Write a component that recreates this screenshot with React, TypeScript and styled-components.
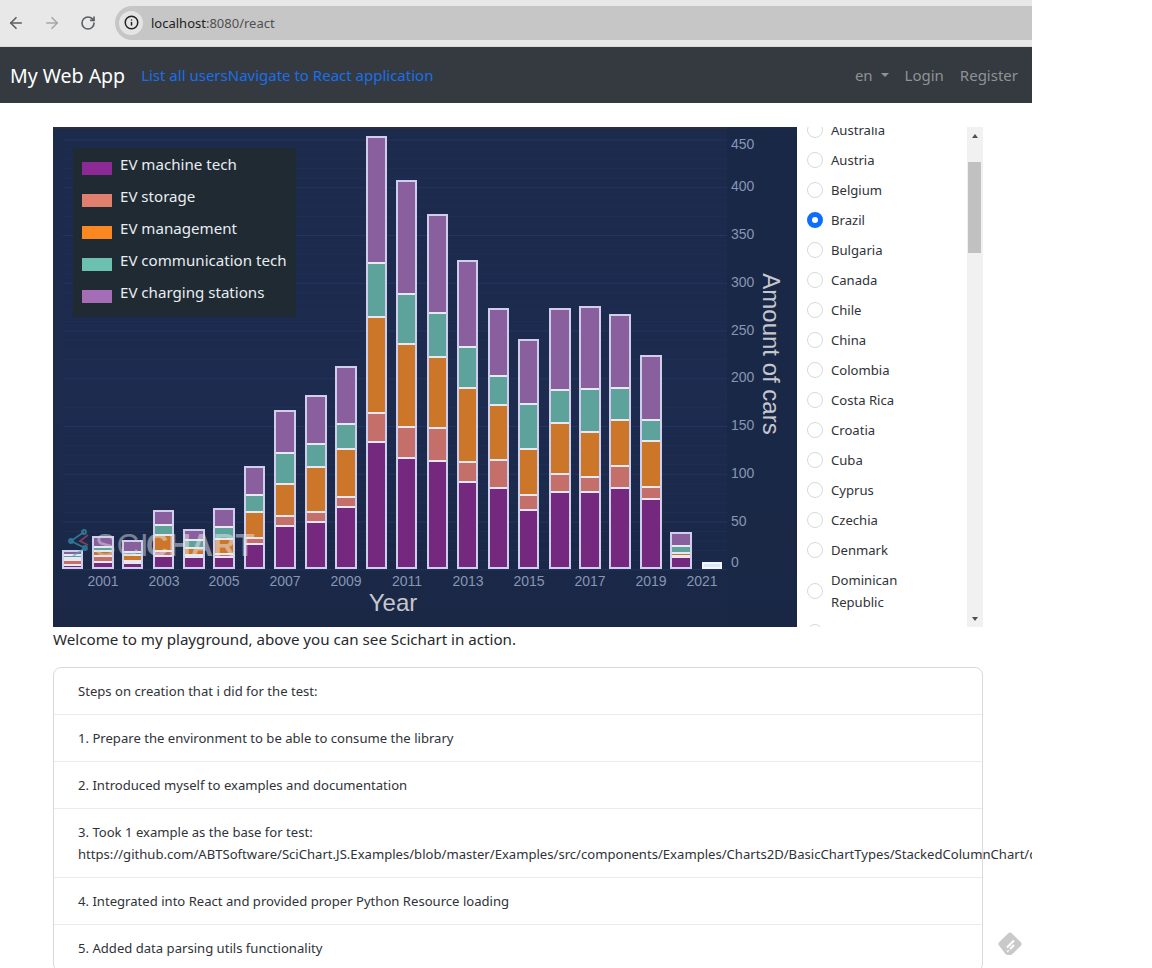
import React from "react";
import styled, { createGlobalStyle } from "styled-components";
import { ArrowLeft, ArrowRight, Info, RotateCw } from "lucide-react";

const UI_FONT = `"Noto Sans", "Open Sans", sans-serif`;
const CHART_FONT = `"Liberation Sans", Arial, sans-serif`;

const GlobalStyle = createGlobalStyle`
	html, body {
		margin: 0;
		padding: 0;
		background: #fff;
		overflow: hidden;
	}
	* {
		box-sizing: border-box;
	}
`;

// pixel y of the top of each segment: machine, storage, management, communication, charging
const BARS: { x: number; w: number; tops: number[] }[] = [
	{ x: 63, w: 19, tops: [565, 560, 558, 555, 551] },
	{ x: 93, w: 20, tops: [562, 556, 551, 547, 537] },
	{ x: 123, w: 19, tops: [563, 561, 555, 552, 541] },
	{ x: 154, w: 19, tops: [556, 551, 535, 525, 511] },
	{ x: 184, w: 20, tops: [557, 555, 548, 540, 530] },
	{ x: 214, w: 20, tops: [557, 554, 539, 527, 509] },
	{ x: 245, w: 19, tops: [544, 538, 512, 495, 467] },
	{ x: 275, w: 20, tops: [526, 516, 484, 453, 411] },
	{ x: 306, w: 20, tops: [522, 512, 467, 444, 396] },
	{ x: 336, w: 20, tops: [507, 497, 449, 424, 367] },
	{ x: 367, w: 19, tops: [442, 413, 317, 263, 137] },
	{ x: 397, w: 19, tops: [458, 427, 344, 294, 181] },
	{ x: 428, w: 19, tops: [461, 428, 357, 313, 215] },
	{ x: 458, w: 19, tops: [482, 462, 388, 347, 261] },
	{ x: 489, w: 19, tops: [488, 460, 405, 376, 309] },
	{ x: 519, w: 19, tops: [510, 495, 449, 404, 340] },
	{ x: 550, w: 20, tops: [492, 474, 423, 390, 309] },
	{ x: 580, w: 20, tops: [492, 477, 432, 389, 307] },
	{ x: 610, w: 20, tops: [488, 466, 420, 388, 315] },
	{ x: 641, w: 20, tops: [499, 487, 441, 420, 356] },
	{ x: 671, w: 20, tops: [557, 556, 553, 546, 533] },
];

const SEGMENT_COLORS = ["#74297f", "#c46f6a", "#cc762a", "#5ea39b", "#8a5f9d"];
const BASELINE = 568;

const X_TICKS = [
	[103, "2001"], [164, "2003"], [224, "2005"], [285, "2007"], [346, "2009"], [407, "2011"],
	[468, "2013"], [529, "2015"], [590, "2017"], [651, "2019"], [702, "2021"],
] as const;

const Y_TICKS = [
	[144, "450"], [186, "400"], [234, "350"], [282, "300"], [330, "250"],
	[377, "200"], [425, "150"], [473, "100"], [521, "50"], [562, "0"],
] as const;

const LEGEND = [
	["EV machine tech", "#8b2a94"],
	["EV storage", "#e07f6d"],
	["EV management", "#fa8720"],
	["EV communication tech", "#6cc0b0"],
	["EV charging stations", "#a56db5"],
];

const COUNTRIES = [
	"Algeria", "Argentina", "Armenia", "Australia", "Austria", "Belgium", "Brazil", "Bulgaria", "Canada", "Chile",
	"China", "Colombia", "Costa Rica", "Croatia", "Cuba", "Cyprus", "Czechia", "Denmark", "Dominican Republic", "Ecuador",
];

const STEPS = [
	"Steps on creation that i did for the test:",
	"1. Prepare the environment to be able to consume the library",
	"2. Introduced myself to examples and documentation",
	"3. Took 1 example as the base for test: https://github.com/ABTSoftware/SciChart.JS.Examples/blob/master/Examples/src/components/Examples/Charts2D/BasicChartTypes/StackedColumnChart/drawExample.ts",
	"4. Integrated into React and provided proper Python Resource loading",
	"5. Added data parsing utils functionality",
];

const ChartDrawing = () => {
	const gridLines: number[] = [];
	for (let y = 140; y < 570; y += 9.55) gridLines.push(y);

	return (
		<ChartSvg viewBox="53 127 744 500">
			<defs>
				<linearGradient id="chartBg" x1="0" y1="0" x2="0" y2="1">
					<stop offset="0" stopColor="#1c2a4c" />
					<stop offset="0.55" stopColor="#1c2b4e" />
					<stop offset="1" stopColor="#1a2745" />
				</linearGradient>
			</defs>
			<rect x="53" y="127" width="744" height="500" fill="url(#chartBg)" />
			<rect x="53" y="127" width="744" height="2" fill="#2a2d3c" />
			<rect x="727" y="127" width="70" height="500" fill="#1a2846" opacity="0.7" />

			{gridLines.map((y, i) => (
				<line
					key={y}
					x1="63"
					x2="727"
					y1={y}
					y2={y}
					stroke={i % 5 === 0 ? "#233465" : "#1f2e58"}
					strokeWidth="1"
				/>
			))}

			{BARS.map((bar) => (
				<g key={bar.x}>
					{bar.tops.map((top, i) => {
						const bottom = i === 0 ? BASELINE : bar.tops[i - 1];
						return (
							<rect
								key={i}
								x={bar.x}
								y={top}
								width={bar.w}
								height={bottom - top}
								fill={SEGMENT_COLORS[i]}
								stroke="#e8e8f2"
								strokeWidth="2"
							/>
						);
					})}
					<rect
						x={bar.x}
						y={bar.tops[4]}
						width={bar.w}
						height={BASELINE - bar.tops[4]}
						fill="none"
						stroke="#cfcfec"
						strokeWidth="2"
					/>
				</g>
			))}
			<rect x="703" y="563" width="18" height="5" fill="#dce8f6" stroke="#f2f6fb" strokeWidth="2" />

			<g opacity="0.6" fill="none" strokeWidth="1.800">
				<path d="M84 532 L71 541 L85 548 L73 556" stroke="#3ea7c4" />
				<path d="M88 535 L80 541 L88 545" stroke="#c0506a" />
				<circle cx="84" cy="532" r="2" stroke="#3ea7c4" />
				<circle cx="71" cy="541" r="2" stroke="#3ea7c4" />
				<circle cx="85" cy="548" r="2" stroke="#3ea7c4" />
			</g>
			<g opacity="0.5">
				<text x="95" y="556" fontFamily={CHART_FONT} fontSize="31" fill="#d5d8e0" letterSpacing="1">
					SCI
				</text>
				<text x="146" y="556" fontFamily={CHART_FONT} fontSize="31" fontWeight="700" fill="#e8e9ee">
					CHART
				</text>
			</g>

			{X_TICKS.map(([x, label]) => (
				<TickLabel key={label} x={x} y={586} textAnchor="middle">
					{label}
				</TickLabel>
			))}
			{Y_TICKS.map(([y, label]) => (
				<TickLabel key={label} x={731} y={y + 5}>
					{label}
				</TickLabel>
			))}

			<AxisTitle x={393} y={611} textAnchor="middle">
				Year
			</AxisTitle>
			<AxisTitle x={0} y={0} textAnchor="middle" transform="translate(763 354) rotate(90)">
				Amount of cars
			</AxisTitle>
		</ChartSvg>
	);
};

const FeedlyIcon = () => (
	<svg width="26" height="26" viewBox="0 0 26 26">
		<path
			d="M11 2.400a2.800 2.800 0 0 1 4 0l8.600 8.600a2.800 2.800 0 0 1 0 4l-8.100 8.100a2.800 2.800 0 0 1-1.900.8h-3.200a2.800 2.800 0 0 1-1.900-.8L2.400 15a2.800 2.800 0 0 1 0-4z"
			fill="#c9c9c9"
		/>
		<g stroke="#fff" strokeWidth="2" fill="none">
			<path d="M17 9.500l-7 7" />
			<path d="M17 14l-4 4" />
			<path d="M10.500 19.500l1 1" />
		</g>
	</svg>
);

const App = () => {
	return (
		<Frame>
			<GlobalStyle />
			<BrowserBar>
				<NavIcon>
					<ArrowLeft size={18} strokeWidth={2.2} color="#5b5e62" />
				</NavIcon>
				<NavIcon>
					<ArrowRight size={18} strokeWidth={2.2} color="#a5a7aa" />
				</NavIcon>
				<NavIcon>
					<RotateCw size={16} strokeWidth={2.4} color="#5b5e62" />
				</NavIcon>
				<Omnibox>
					<InfoChip>
						<Info size={15} strokeWidth={2.4} color="#222" />
					</InfoChip>
					<UrlHost>localhost</UrlHost>
					<UrlPath>:8080/react</UrlPath>
				</Omnibox>
			</BrowserBar>

			<Navbar>
				<NavGroup>
					<Brand>My Web App</Brand>
					<NavLink>List all users</NavLink>
					<NavLink>Navigate to React application</NavLink>
				</NavGroup>
				<NavRight>
					<MutedLink>
						en <Caret />
					</MutedLink>
					<MutedLink>Login</MutedLink>
					<MutedLink>Register</MutedLink>
				</NavRight>
			</Navbar>

			<Main>
				<ChartRow>
					<ChartWrap>
						<ChartDrawing />
						<Legend>
							{LEGEND.map(([label, color]) => (
								<LegendRow key={label}>
									<Swatch $color={color} />
									{label}
								</LegendRow>
							))}
						</Legend>
					</ChartWrap>
					<RadioPanel>
						<RadioViewport>
							<RadioList>
								{COUNTRIES.map((name) => (
									<RadioRow key={name}>
										<RadioDot $checked={name === "Brazil"} />
										<RadioLabel>{name}</RadioLabel>
									</RadioRow>
								))}
							</RadioList>
						</RadioViewport>
						<ScrollTrack>
							<ScrollArrow $up />
							<ThumbArea>
								<Thumb />
							</ThumbArea>
							<ScrollArrow />
						</ScrollTrack>
					</RadioPanel>
				</ChartRow>
				<Welcome>Welcome to my playground, above you can see Scichart in action.</Welcome>
				<StepList>
					{STEPS.map((step) => (
						<StepItem key={step}>{step}</StepItem>
					))}
				</StepList>
			</Main>

			<FloatingIcon>
				<FeedlyIcon />
			</FloatingIcon>
		</Frame>
	);
};

const Frame = styled.div`
	position: relative;
	width: 1032px;
	height: 968px;
	overflow: hidden;
	background: #fff;
	font-family: ${UI_FONT};
	color: #212529;
`;

const Main = styled.main`
	width: 930px;
	margin-left: 53px;
	padding-top: 24px;
`;

const ChartRow = styled.div`
	display: flex;
	height: 500px;
`;

const Welcome = styled.p`
	margin: 0 0 15px;
	font-size: 15.150px;
	line-height: 25px;
	color: #26292c;
`;

const FloatingIcon = styled.div`
	position: absolute;
	left: 997px;
	top: 931px;
	line-height: 0;
`;

const BrowserBar = styled.header`
	display: flex;
	align-items: center;
	height: 47px;
	padding: 0 0 1px 0;
	background: #e8e8e8;
	border-bottom: 1px solid #d8d8d8;
`;

const NavIcon = styled.span`
	display: flex;
	align-items: center;
	justify-content: center;
	width: 36px;
	margin-left: -2px;
	margin-right: 2px;
`;

const Omnibox = styled.div`
	display: flex;
	align-items: center;
	flex: 1;
	height: 34px;
	margin-left: 7px;
	padding-left: 4px;
	background: #c6c6c7;
	border-radius: 17px 0 0 17px;
	font-size: 13px;
`;

const InfoChip = styled.span`
	display: flex;
	align-items: center;
	justify-content: center;
	width: 24px;
	height: 24px;
	margin-right: 8px;
	border-radius: 50%;
	background: #e4e4e4;
`;

const UrlHost = styled.span`
	color: #222;
`;

const UrlPath = styled.span`
	color: #505050;
`;

const Navbar = styled.nav`
	display: flex;
	align-items: center;
	justify-content: space-between;
	height: 56px;
	padding: 0 14px 0 10px;
	background: #343a40;
`;

const NavGroup = styled.div`
	display: flex;
	align-items: center;
`;

const NavRight = styled.div`
	display: flex;
	align-items: center;
	column-gap: 16px;
`;

const Brand = styled.span`
	margin-right: 16px;
	font-size: 19.550px;
	color: #fff;
`;

const NavLink = styled.a`
	font-size: 15px;
	color: #1a6fe8;
`;

const MutedLink = styled.span`
	display: flex;
	align-items: center;
	font-size: 15px;
	color: #8f9296;
	white-space: pre;
`;

const Caret = styled.span`
	display: inline-block;
	margin-left: 4px;
	border-top: 4.500px solid #8f9296;
	border-left: 4.500px solid transparent;
	border-right: 4.500px solid transparent;
`;

const ChartWrap = styled.div`
	position: relative;
	flex: none;
	width: 744px;
	height: 500px;
`;

const ChartSvg = styled.svg`
	display: block;
	width: 744px;
	height: 500px;
`;

const TickLabel = styled.text`
	font-family: ${CHART_FONT};
	font-size: 14px;
	fill: #8696b4;
`;

const AxisTitle = styled.text`
	font-family: ${CHART_FONT};
	font-size: 24px;
	fill: #c5c7cc;
`;

const Legend = styled.div`
	position: absolute;
	left: 20px;
	top: 21px;
	display: flex;
	flex-direction: column;
	width: 223px;
	height: 169px;
	padding-left: 9px;
	background: #1f2a33;
	font-size: 15.100px;
	color: #e8edf0;
`;

const LegendRow = styled.div`
	display: flex;
	align-items: center;
	height: 32px;
`;

const Swatch = styled.span<{ $color: string }>`
	width: 30px;
	height: 13px;
	margin: 8px 8px 0 0;
	background: ${(p) => p.$color};
`;

const RadioPanel = styled.aside`
	display: flex;
	flex: 1;
	height: 500px;
`;

const RadioViewport = styled.div`
	flex: 1;
	overflow: hidden;
`;

const RadioList = styled.div`
	margin-top: -102px;
	padding-left: 10px;
`;

const RadioRow = styled.label`
	display: flex;
	align-items: center;
	padding: 4px 0;
`;

const RadioDot = styled.span<{ $checked?: boolean }>`
	flex: none;
	width: 16px;
	height: 16px;
	margin-right: 8px;
	border-radius: 50%;
	border: ${(p) => (p.$checked ? "5px solid #0d6efd" : "1px solid #d9d9d9")};
	background: #fff;
`;

const RadioLabel = styled.span`
	max-width: 100px;
	font-size: 13.100px;
	line-height: 22px;
	color: #2f3338;
`;

const ScrollTrack = styled.div`
	display: flex;
	flex-direction: column;
	flex: none;
	width: 16px;
	background: #f1f1f1;
`;

const ThumbArea = styled.div`
	flex: 1;
	padding: 18px 2px 0 1px;
`;

const Thumb = styled.div`
	height: 91px;
	background: #c1c1c1;
`;

const ScrollArrow = styled.div<{ $up?: boolean }>`
	display: flex;
	align-items: center;
	justify-content: center;
	flex: none;
	height: 17px;
	&::before {
		content: "";
		border-left: 3.500px solid transparent;
		border-right: 3.500px solid transparent;
		${(p) => (p.$up ? "border-bottom: 4px solid #505050;" : "border-top: 4px solid #505050;")}
	}
`;

const StepList = styled.ul`
	margin: 0;
	padding: 0;
	list-style: none;
	border: 1px solid #d9dadb;
	border-radius: 8px;
`;

const StepItem = styled.li`
	padding: 12px 24px;
	font-size: 13.100px;
	line-height: 22px;
	color: #2f3338;
	border-bottom: 1px solid #ebebec;
	&:last-child {
		border-bottom: none;
	}
`;

export default App;
